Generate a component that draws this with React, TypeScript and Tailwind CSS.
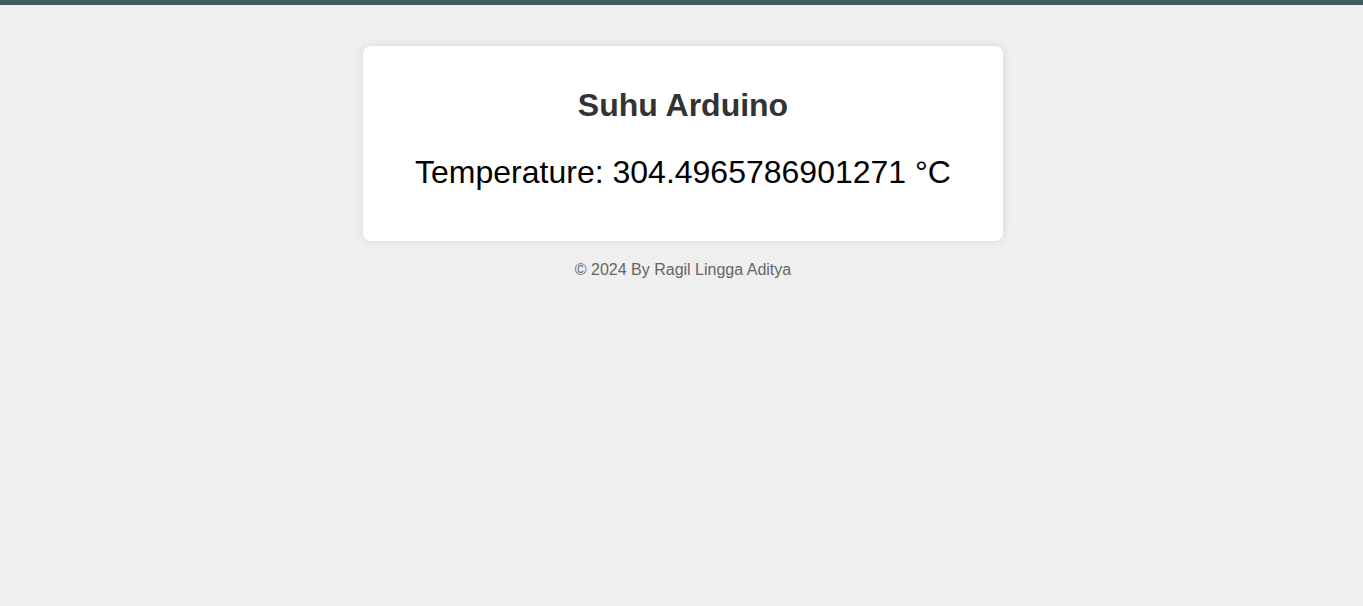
export default function App() {
  return (
    <div
      className="min-h-screen bg-[#efefef]"
      style={{ fontFamily: '"Liberation Sans", Arial, sans-serif' }}
    >
      {/* top strip */}
      <div className="h-[5px] bg-[#455a64]" />

      <main className="flex flex-col items-center pt-[41px] pl-[3px]">
        {/* card */}
        <div className="w-[640px] rounded-lg bg-white pt-[40.5px] pb-[50.5px] text-center shadow-[0_0_10px_rgba(0,0,0,0.1)]">
          <h1 className="text-[32px] font-bold leading-[37px] text-[#333333]">Suhu Arduino</h1>
          <p className="mt-[30px] text-[32px] leading-[37px] text-black">
            Temperature: 304.4965786901271 °C
          </p>
        </div>

        <footer className="mt-[20px] text-[16px] leading-[18px] text-[#666666]">
          © 2024 By Ragil Lingga Aditya
        </footer>
      </main>
    </div>
  );
}
